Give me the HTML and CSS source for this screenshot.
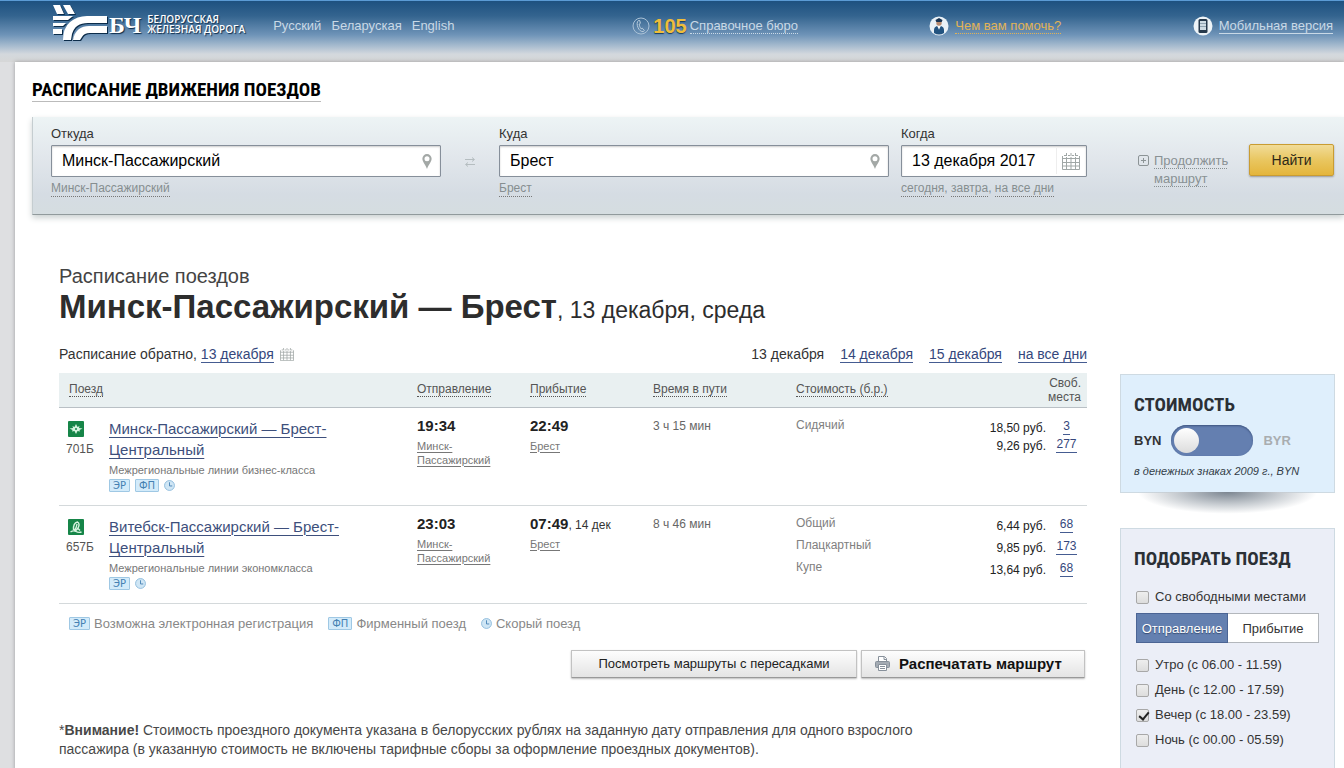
FILE: index.html
```html
<!DOCTYPE html>
<html lang="ru">
<head>
<meta charset="utf-8">
<title>Расписание движения поездов</title>
<link rel="stylesheet" href="styles.css">
</head>
<body>
<svg class="defs" aria-hidden="true">
  <symbol id="pin" viewBox="0 0 10 15"><path fill="#a3a8a6" fill-rule="evenodd" d="M5 0a4.600 4.600 0 0 0-4.600 4.700C.4 8 3.600 10.500 5 15c1.400-4.500 4.600-7 4.600-10.300A4.600 4.600 0 0 0 5 0zm0 2.200a2.500 2.500 0 1 1 0 5 2.500 2.500 0 0 1 0-5z"/></symbol>
  <symbol id="calendar" viewBox="0 0 18 17"><path fill="none" stroke="#a0a7a6" d="M.5 3v13.500h17V3M.5 5.500h17M.5 9.500h17M.5 13h17M4.500 4v12M9 4v12M13.500 4v12M2 2.500h2M6 2.500h2M10 2.500h2M14 2.500h2M4.500 0v3M9 0v3M13.500 0v3"/></symbol>
  <symbol id="clock" viewBox="0 0 12 12"><circle cx="6" cy="6" r="5.400" fill="#cfe6f5" stroke="#8dbbdc"/><path d="M6 2.500V6.500H9" fill="none" stroke="#4883b5"/></symbol>
</svg>

<header class="header">
  <a class="logo" href="#">
    <svg class="logo-mark" viewBox="0 0 55 37" aria-hidden="true">
      <path fill="#0c2c4a" transform="translate(1 1)" d="M0 0h7l4 9H4zM10 0h7l5 9h-7zM0 11h20l-5 4H0zM0 18h13l-3 3H0zM0 24h9v5H0zM54 11v7H35Q22 18 19 29l-1 6h-8q0-12 7-18t17-6zM54 21v7H37q-6 0-8 4l-2 3h-8q1-7 6-11 5-3 11-3z"/>
      <path fill="#fff" d="M0 0h7l4 9H4zM10 0h7l5 9h-7zM0 11h20l-5 4H0zM0 18h13l-3 3H0zM0 24h9v5H0z"/>
      <path fill="#fff" d="M54 11v7H35Q22 18 19 29l-1 6h-8q0-12 7-18t17-6zM54 21v7H37q-6 0-8 4l-2 3h-7q1-7 6-11 4-3 10-3z"/>
    </svg>
    <span class="logo-abbr">БЧ</span>
    <span class="logo-name">БЕЛОРУССКАЯ<br>ЖЕЛЕЗНАЯ ДОРОГА</span>
  </a>
  <nav class="langs"><a href="#">Русский</a><a href="#">Беларуская</a><a href="#">English</a></nav>
  <div class="services">
    <div class="service">
      <svg width="18" height="18" viewBox="0 0 18 18" aria-hidden="true"><circle cx="9" cy="9" r="8" fill="none" stroke="#a9c1d6"/><path d="M6.500 3.500C4.500 5 5 8 6 10.500s3 4.500 5.500 4l.8-1-2-2.300-1.200.6C8 10.500 7.200 8.500 7.200 7l1.200-.7-.7-2.800z" fill="none" stroke="#b9cddd"/></svg>
      <strong class="phone">105</strong><a class="dotted" href="#">Справочное бюро</a>
    </div>
    <div class="service help">
      <svg width="20" height="20" viewBox="0 0 20 20" aria-hidden="true"><circle cx="10" cy="10" r="9.500" fill="#e9f1f7"/><path fill="#225380" d="M5 17v-3q0-3 3-4l2 3 2-3q3 1 3 4v3q-5 3-10 0z"/><circle cx="10" cy="7" r="2.700" fill="#b68a70"/><path fill="#173352" d="M6.500 4 10 2l3.500 2-.8 2H7.300z"/><path fill="#fff" d="m9 10 1 4 1-4z"/></svg>
      <a class="dotted" href="#">Чем вам помочь?</a>
    </div>
    <div class="service">
      <svg width="20" height="20" viewBox="0 0 20 20" aria-hidden="true"><circle cx="10" cy="10" r="9.500" fill="#edf3f7"/><rect x="5.500" y="3" width="9" height="14" rx="1.500" fill="#26394c"/><path fill="#cfdce5" d="M7 5h6v9H7z"/><path stroke="#8fa3b2" d="M7 7.500h6M7 10.500h6"/></svg>
      <a class="solid" href="#">Мобильная версия</a>
    </div>
  </div>
</header>

<div class="page">
  <h2 class="page-title"><a href="#">РАСПИСАНИЕ ДВИЖЕНИЯ ПОЕЗДОВ</a></h2>

  <form class="search">
    <div class="field">
      <label for="from">Откуда</label>
      <div class="box"><input id="from" type="text" value="Минск-Пассажирский"><svg width="10" height="15" aria-hidden="true"><use href="#pin"/></svg></div>
      <div class="hint"><a href="#">Минск-Пассажирский</a></div>
    </div>
    <button class="swap" type="button" aria-label="Поменять местами">
      <svg width="12" height="10" viewBox="0 0 12 10" aria-hidden="true"><path d="M1 2.500h9M8 .5l2.500 2L8 4.500M11 7.500H2M4 5.500 1.500 7.500l2.500 2" fill="none" stroke="#b5bdc0"/></svg>
    </button>
    <div class="field">
      <label for="to">Куда</label>
      <div class="box"><input id="to" type="text" value="Брест"><svg width="10" height="15" aria-hidden="true"><use href="#pin"/></svg></div>
      <div class="hint"><a href="#">Брест</a></div>
    </div>
    <div class="field date">
      <label for="when">Когда</label>
      <div class="box"><input id="when" type="text" value="13 декабря 2017"><span class="cal"><svg width="18" height="17" aria-hidden="true"><use href="#calendar"/></svg></span></div>
      <div class="hint"><a href="#">сегодня</a>, <a href="#">завтра</a>, <a href="#">на все дни</a></div>
    </div>
    <div class="extend">
      <svg width="11" height="11" viewBox="0 0 11 11" aria-hidden="true"><rect x=".5" y=".5" width="10" height="10" rx="1.500" fill="none" stroke="#8c9496"/><path d="M3 5.500h5M5.500 3v5" stroke="#8c9496"/></svg>
      <a href="#">Продолжить<br>маршрут</a>
    </div>
    <button class="find" type="submit">Найти</button>
  </form>

  <div class="columns">
    <main class="main">
      <p class="kicker">Расписание поездов</p>
      <h1 class="route">Минск-Пассажирский — Брест<span>, 13 декабря, среда</span></h1>
      <div class="days">
        <div class="back">Расписание обратно, <a href="#">13 декабря</a><svg width="14" height="13" aria-hidden="true"><use href="#calendar"/></svg></div>
        <nav class="dates"><span>13 декабря</span><a href="#">14 декабря</a><a href="#">15 декабря</a><a href="#">на все дни</a></nav>
      </div>

      <table class="trains">
        <colgroup><col class="c-num"><col><col class="c-dep"><col class="c-arr"><col class="c-dur"><col class="c-cost"><col class="c-seats"></colgroup>
        <thead>
          <tr>
            <th class="first" colspan="2"><a href="#">Поезд</a></th>
            <th><a href="#">Отправление</a></th>
            <th><a href="#">Прибытие</a></th>
            <th><a href="#">Время в пути</a></th>
            <th><a href="#">Стоимость (б.р.)</a></th>
            <th class="seats">Своб.<br>места</th>
          </tr>
        </thead>
        <tbody>
          <tr>
            <td class="num"><svg width="16" height="16" viewBox="0 0 16 16" aria-hidden="true"><rect width="16" height="16" rx="1" fill="#168548"/><path fill="#d6f3df" d="m8 3 1.500 3 2-1-.5 2 3.500.5-3 1.500.5 1.500-2.500-.5L8 13l-1.500-3-2.500.5L4.500 9l-3-1.500L5 7l-.5-2 2 1z"/><circle cx="8" cy="8" r="1" fill="#168548"/></svg>701Б</td>
            <td class="train"><a href="#">Минск-Пассажирский — Брест-<br>Центральный</a><p>Межрегиональные линии бизнес-класса</p><div class="tags"><span class="tag">ЭР</span><span class="tag">ФП</span><svg width="11" height="11" aria-hidden="true"><use href="#clock"/></svg></div></td>
            <td class="stop"><b>19:34</b><a href="#">Минск-<br>Пассажирский</a></td>
            <td class="stop"><b>22:49</b><a href="#">Брест</a></td>
            <td class="dur">3 ч 15 мин</td>
            <td class="fares" colspan="2">
              <div class="fare"><span class="kind">Сидячий</span><span class="price">18,50 руб.<br>9,26 руб.</span><span class="free"><a href="#">3</a><br><a href="#">277</a></span></div>
            </td>
          </tr>
          <tr>
            <td class="num"><svg width="16" height="16" viewBox="0 0 16 16" aria-hidden="true"><rect width="16" height="16" rx="1" fill="#168548"/><path d="M2.500 13q3-2 5.500-.5t5.500.5M5.500 11q-.5-7 4-8 2.500 1.500 1 5T6.500 12M9 5q-.5 4-2.500 6.500M10 9.500l2 2" fill="none" stroke="#d6f3df" stroke-width="1.400"/></svg>657Б</td>
            <td class="train"><a href="#">Витебск-Пассажирский — Брест-<br>Центральный</a><p>Межрегиональные линии экономкласса</p><div class="tags"><span class="tag">ЭР</span><svg width="11" height="11" aria-hidden="true"><use href="#clock"/></svg></div></td>
            <td class="stop"><b>23:03</b><a href="#">Минск-<br>Пассажирский</a></td>
            <td class="stop"><b>07:49</b><span>, 14 дек</span><a href="#">Брест</a></td>
            <td class="dur">8 ч 46 мин</td>
            <td class="fares" colspan="2">
              <div class="fare"><span class="kind">Общий</span><span class="price">6,44 руб.</span><span class="free"><a href="#">68</a></span></div>
              <div class="fare"><span class="kind">Плацкартный</span><span class="price">9,85 руб.</span><span class="free"><a href="#">173</a></span></div>
              <div class="fare"><span class="kind">Купе</span><span class="price">13,64 руб.</span><span class="free"><a href="#">68</a></span></div>
            </td>
          </tr>
        </tbody>
      </table>

      <div class="legend">
        <span><i class="tag">ЭР</i>Возможна электронная регистрация</span>
        <span><i class="tag">ФП</i>Фирменный поезд</span>
        <span><svg width="11" height="11" aria-hidden="true"><use href="#clock"/></svg>Скорый поезд</span>
      </div>

      <div class="actions">
        <button class="btn transfers" type="button">Посмотреть маршруты с пересадками</button>
        <button class="btn print" type="button"><svg width="15" height="15" viewBox="0 0 15 15" aria-hidden="true"><path d="M3.500 6V.500h6l2 2V6M9 1v2.500h2.500" fill="#fff" stroke="#87909a"/><rect x=".5" y="5.500" width="14" height="6" rx="1" fill="#a4abb3" stroke="#87909a"/><path d="M3.500 8.500h8v6h-8zM5 10.500h5M5 12.500h5" fill="#fff" stroke="#87909a"/></svg>Распечатать маршрут</button>
      </div>

      <p class="notice">*<b>Внимание!</b> Стоимость проездного документа указана в белорусских рублях на заданную дату отправления для одного взрослого пассажира (в указанную стоимость не включены тарифные сборы за оформление проездных документов).</p>
    </main>

    <aside class="side">
      <section class="card cost">
        <h3>СТОИМОСТЬ</h3>
        <div class="currency">
          <label for="cur">BYN</label>
          <input id="cur" class="toggle" type="checkbox" role="switch">
          <span class="off">BYR</span>
        </div>
        <p>в денежных знаках 2009 г., BYN</p>
      </section>
      <section class="card pick">
        <h3>ПОДОБРАТЬ ПОЕЗД</h3>
        <label class="check"><input type="checkbox">Со свободными местами</label>
        <div class="segment"><button type="button" class="on" aria-pressed="true">Отправление</button><button type="button" aria-pressed="false">Прибытие</button></div>
        <label class="check"><input type="checkbox">Утро (с 06.00 - 11.59)</label>
        <label class="check"><input type="checkbox">День (с 12.00 - 17.59)</label>
        <label class="check"><input type="checkbox" checked>Вечер (с 18.00 - 23.59)</label>
        <label class="check"><input type="checkbox">Ночь (с 00.00 - 05.59)</label>
      </section>
    </aside>
  </div>
</div>
</body>
</html>
```
FILE: styles.css
```css
* { box-sizing: border-box; }
html { background: #dedfe1; }
body {
  margin: 0;
  display: flex;
  flex-direction: column;
  min-height: 100vh;
  font: 13px/18px "Liberation Sans", Arial, sans-serif;
  color: #333;
  overflow-x: hidden;
}
p, h1, h2, h3 { margin: 0; }
a { color: inherit; text-decoration: none; }
input, button { font-family: inherit; }
.defs { position: absolute; width: 0; height: 0; }

/* header */
.header {
  display: flex;
  align-items: flex-start;
  height: 62px;
  padding: 4px 11px 0 53px;
  border-top: 1px solid #5b9bd5;
  background: linear-gradient(#1d5180 0, #34648f 15px, #6f94b8 34px, #a8bccf 45px, #d3d8dd 53px, #d6d7d7 100%);
  color: #c9d9e6;
}
.logo { display: flex; color: #fff; text-shadow: 1px 1px 1px #0c2c4a; }
.logo-mark { width: 55px; height: 37px; }
.logo-abbr { margin: 8px 6px 0 1px; font: bold 24px/24px "Liberation Serif", serif; }
.logo-name { margin-top: 9px; font: 600 10px/10px "Open Sans", sans-serif; }
.langs { display: flex; gap: 10px; margin: 12px 0 0 28px; }
.services { flex: 1; display: flex; justify-content: space-between; margin: 11px 0 0 178px; }
.service { display: flex; align-items: center; gap: 6px; height: 20px; }
.service a { line-height: 15px; }
.service:first-child { gap: 3px; }
.phone { font: bold 20px/20px "Liberation Sans Narrow", "Liberation Sans", sans-serif; color: #efbd3a; text-shadow: 0 1px 1px #173d60; }
.dotted { border-bottom: 1px dotted; }
.solid { border-bottom: 1px solid; }
.help a { color: #e1b356; }

/* page */
.page { flex: 1; display: flex; flex-direction: column; margin-left: 15px; padding: 17px 0 0 17px; background: #fff; box-shadow: 0 0 4px #9a9b9d; }
.page-title { font: bold 19px/22px "Liberation Sans Narrow", "Roboto Condensed", "DejaVu Sans Condensed", sans-serif; color: #000; }
.page-title a { display: inline-block; border-bottom: 1px solid #bbb; }

/* search */
.search {
  display: flex;
  margin-top: 15px;
  padding: 8px 10px 17px 18px;
  border-left: 1px solid #c5cdd0;
  border-bottom: 1px solid #919a9c;
  background: linear-gradient(#edf4f5, #e2e7ec 40%, #d5dce3 80%, #d5dde0);
  box-shadow: 0 3px 6px #ccd2d2;
}
.field { flex: 1; min-width: 0; }
.field.date { flex: 0 0 186px; margin-left: 12px; }
.field label { display: block; height: 20px; line-height: 18px; }
.box { display: flex; align-items: center; height: 32px; padding-right: 8px; border: 1px solid #868f9a; border-radius: 1px; background: #fff; box-shadow: inset 0 1px 2px #ccc; }
.box input { flex: 1; min-width: 0; height: 28px; padding: 0 10px; border: 0; background: none; font-size: 16px; color: #000; }
.box .cal { display: flex; align-items: center; height: 26px; padding-left: 5px; border-left: 1px solid #eee; }
.date .box { padding-right: 6px; }
.hint { padding-top: 3px; font-size: 12px; line-height: 16px; color: #868e90; }
.hint a { display: inline-block; line-height: 15px; border-bottom: 1px dotted #777; }
.swap { width: 58px; height: 32px; margin-top: 21px; padding: 0; border: 0; background: none; }
.extend { display: flex; gap: 5px; margin: 29px 0 0 51px; color: #899194; }
.extend svg { margin-top: 1px; }
.extend a { text-decoration: underline dotted 1px; text-underline-offset: 3px; width: 95px; margin-top: -2px; }
.find { width: 85px; height: 32px; margin-top: 19px; padding: 0; border: 1px solid #c99c32; border-radius: 2px; background: linear-gradient(#f1dc98, #e9c660 50%, #e4b53b); box-shadow: 0 1px 2px #999; font-size: 14px; color: #2d2818; }

/* columns */
.columns { flex: 1; display: flex; padding: 0 9px 0 27px; }
.main { flex: 1; min-width: 0; padding-top: 48px; }
.kicker { font-size: 20px; line-height: 26px; color: #444; }
.route { font-size: 33px; line-height: 36px; color: #2d2d2d; }
.route span { font-size: 23px; font-weight: normal; }
.days { display: flex; justify-content: space-between; margin-top: 18px; font-size: 14px; line-height: 17px; }
.days a { display: inline-block; border-bottom: 1px solid #455c91; color: #35477c; line-height: 16px; }
.back svg { margin-left: 6px; vertical-align: -2px; }
.dates { display: flex; gap: 16px; }

/* trains */
.trains { width: 100%; margin-top: 10px; border-collapse: collapse; table-layout: fixed; }
.c-num { width: 50px; }
.c-dep { width: 113px; }
.c-arr { width: 123px; }
.c-dur { width: 143px; }
.c-cost { width: 250px; }
.c-seats { width: 41px; }
.trains th { height: 34px; padding: 0; background: #e9f0f1; border-bottom: 1px solid #b9c0c5; font-size: 12px; line-height: 14px; font-weight: normal; text-align: left; color: #555; }
.trains th a { display: inline-block; border-bottom: 1px dotted #555; }
.trains .first { padding-left: 10px; }
.trains .seats { padding-right: 6px; text-align: right; white-space: nowrap; }
.trains td { height: 98px; padding: 10px 0 0; vertical-align: top; border-bottom: 1px solid #d4d9db; }
.trains .num { padding: 13px 0 0 7px; font-size: 12px; line-height: 18px; color: #555; }
.trains .stop, .trains .fares { padding-top: 9px; }
.num svg { display: block; margin: 0 0 3px 2px; }
.train > a { font-size: 15px; line-height: 21px; color: #3d4f7c; text-decoration: underline 1px; text-underline-offset: 3px; }
.train p { font-size: 11px; line-height: 14px; margin-top: 3px; color: #777; }
.tags { display: flex; align-items: center; gap: 5px; margin-top: 2px; }
.tag { display: inline-block; height: 13px; padding: 0 3px; border: 1px solid #9fc8e4; border-radius: 1px; background: #d3ebfa; font: normal 10px/11px "DejaVu Sans", sans-serif; color: #4581b2; }
.stop b { font-size: 15px; line-height: 18px; color: #222; }
.stop span { font-size: 12px; }
.stop a { display: block; margin-top: 3px; font-size: 11px; line-height: 14px; color: #777; text-decoration: underline 1px; text-underline-offset: 2px; }
.dur, .kind { font-size: 12px; line-height: 16px; color: #666; }
.kind { color: #808080; }
.fare { display: grid; grid-template-columns: 1fr auto 41px; margin-bottom: 4px; font-size: 12px; line-height: 18px; }
.price { margin-top: 2px; margin-bottom: -2px; text-align: right; color: #222; }
.free { text-align: center; color: #35477c; }
.free a { display: inline-block; line-height: 15px; border-bottom: 1px solid #455c91; }

.legend { display: flex; gap: 15px; margin: 11px 0 0 10px; color: #888; }
.legend > span { display: flex; align-items: center; gap: 4px; }
.actions { display: flex; justify-content: flex-end; gap: 4px; margin: 17px 2px 0 0; }
.btn { display: flex; align-items: center; justify-content: center; height: 28px; padding: 0; border: 1px solid #c2c2c2; border-bottom-color: #999; border-radius: 1px; background: linear-gradient(#fdfdfd, #e4e4e4); box-shadow: 0 1px 2px #bbb; font-size: 13px; color: #222; }
.transfers { width: 286px; }
.print { justify-content: flex-start; gap: 9px; width: 224px; padding-left: 13px; font-size: 15px; font-weight: bold; color: #111; }
.notice { max-width: 880px; margin-top: 43px; font-size: 14px; line-height: 19px; color: #484848; }

/* sidebar */
.side { display: flex; flex-direction: column; gap: 35px; flex: 0 0 215px; margin: 159px 0 0 33px; }
.card { padding: 19px 13px 14px; border: 1px solid #cedae2; }
.card h3 { font: bold 19px/22px "Liberation Sans Narrow", "Roboto Condensed", "DejaVu Sans Condensed", sans-serif; color: #2b3036; }
.cost { position: relative; background: #dfeffc; }
.cost::after { content: ""; position: absolute; left: 16px; right: 16px; top: 100%; height: 22px; background: radial-gradient(ellipse at 50% 0, #7b8590 0, #c7ccd1 40%, transparent 70%); }
.currency { display: flex; align-items: center; gap: 10px; margin-top: 9px; font-size: 13px; font-weight: bold; }
.toggle { appearance: none; width: 82px; height: 31px; margin: 0; padding: 3px; border-radius: 16px; background: #647fb0; box-shadow: inset 0 1px 2px #3e5580; }
.toggle::before { content: ""; display: block; width: 25px; height: 25px; border-radius: 50%; background: linear-gradient(#fff, #dcdcdc); }
.toggle:checked::before { margin-left: auto; }
.off { color: #a9adb0; }
.cost p { margin-top: 8px; font-size: 11px; line-height: 14px; font-style: italic; color: #333d47; }
.pick { flex: 1; padding-left: 15px; padding-right: 15px; background: #ebeef7; }
.pick h3 { margin: 0 0 18px -2px; }
.check { display: flex; align-items: center; gap: 6px; height: 18px; margin-bottom: 7px; white-space: nowrap; }
.check input { appearance: none; width: 13px; height: 13px; margin: 0; border: 1px solid #a8a8a8; border-radius: 2px; background: linear-gradient(#eee, #ddd); }
.check input:checked::before { content: ""; display: block; width: 4px; height: 8px; margin: 0 0 0 4px; border: solid #222; border-width: 0 2px 2px 0; transform: rotate(40deg); }
.segment { display: flex; height: 30px; margin-bottom: 13px; }
.segment button { flex: 1; padding: 0; border: 1px solid #b3b7bc; border-left: 0; background: #fff; font-size: 13px; color: #333; }
.segment .on { border: 1px solid #4b6494; background: #6480b0; color: #fff; text-shadow: 0 1px 1px #34486e; }
```
